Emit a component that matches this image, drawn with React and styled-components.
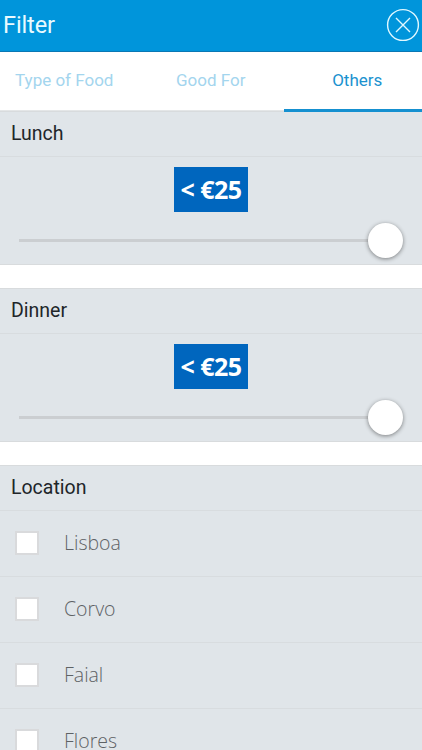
import React from 'react';
import styled, {createGlobalStyle} from "styled-components";

const tabs = ["Type of Food", "Good For", "Others"];
const prices = ["Lunch", "Dinner"];
const locations = ["Lisboa", "Corvo", "Faial", "Flores"];

function PriceFilter({title}) {
    return (
        <Section>
            <SectionTitle>{title}</SectionTitle>
            <PriceBox>
                <Price>&lt; €25</Price>
                <Slider>
                    <Track />
                    <Knob />
                </Slider>
            </PriceBox>
        </Section>
    )
}

function App() {
    return (
        <Page>
            <GlobalStyle />
            <Header>
                <Title>Filter</Title>
                <CloseButton aria-label="Close">
                    <svg width="34" height="34" viewBox="0 0 34 34" fill="none" stroke="#E0F8FF" strokeWidth="1.4">
                        <circle cx="17" cy="17" r="15.4" />
                        <path d="M10 10L24 24M24 10L10 24" />
                    </svg>
                </CloseButton>
            </Header>
            <TabBar>
                {tabs.map(tab => <Tab key={tab} $active={tab === "Others"}>{tab}</Tab>)}
            </TabBar>
            {prices.map(title => <PriceFilter key={title} title={title} />)}
            <Section>
                <SectionTitle>Location</SectionTitle>
                {locations.map(name => (
                    <LocationRow key={name}>
                        <CheckBox type="checkbox" />
                        <span>{name}</span>
                    </LocationRow>
                ))}
            </Section>
        </Page>
    )
}

export default App

const GlobalStyle = createGlobalStyle`
    * {
        box-sizing : border-box;
    }
    body {
        margin : 0;
        background-color : #fff;
        font-family : Roboto, sans-serif;
    }
`
const Page = styled.div`
    height : 750px;
    overflow : hidden;
`
const Header = styled.header`
    display : flex;
    align-items : center;
    justify-content : space-between;
    height : 52px;
    padding : 0 2px 2px 3px;
    border-bottom : 1px solid #0A78B4;
    background-color : #0095DB;
`
const Title = styled.h1`
    margin : 0;
    color : #E9FAFF;
    font-size : 23.5px;
    font-weight : 400;
    letter-spacing : -0.1px;
`
const CloseButton = styled.button`
    display : flex;
    padding : 0;
    border : none;
    background : none;
`
const TabBar = styled.nav`
    display : flex;
    height : 59px;
    margin-left : -9px;
    border-bottom : 1px solid #E4E6E7;
`
const Tab = styled.a`
    position : relative;
    flex : 0 0 146.5px;
    height : 60px;
    border-bottom : ${props => props.$active ? "3px solid #1590D0" : "none"};
    color : ${props => props.$active ? "#1B92CF" : "#A3D5EE"};
    font-size : 17px;
    line-height : 57px;
    text-align : center;
`
const Section = styled.section`
    margin-bottom : 23px;
    border : 1px solid #D8DBDD;
    border-width : 1px 0;
    background-color : #E0E5E9;
`
const SectionTitle = styled.h2`
    height : 45px;
    margin : 0;
    padding-left : 11px;
    border-bottom : 1px solid #D8DCDF;
    color : #212529;
    font-size : 19.5px;
    font-weight : 400;
    line-height : 43px;
`
const PriceBox = styled.div`
    display : flex;
    flex-direction : column;
    align-items : center;
    height : 107px;
    padding : 10px 19px 0;
`
const Price = styled.div`
    width : 74px;
    height : 45px;
    background-color : #0066BE;
    color : #fff;
    font-family : "Open Sans", sans-serif;
    font-size : 25px;
    font-weight : 700;
    letter-spacing : -0.5px;
    line-height : 45px;
    text-align : center;
    white-space : nowrap;
`
const Slider = styled.div`
    display : flex;
    align-items : center;
    width : 100%;
    height : 35px;
    margin-top : 11px;
`
const Track = styled.div`
    flex : 1;
    height : 3px;
    background-color : #CBCED1;
`
const Knob = styled.div`
    width : 35px;
    height : 35px;
    margin-bottom : 1px;
    border-radius : 50%;
    background-color : #fff;
    box-shadow : 0 1px 4px rgba(0, 0, 0, 0.45);
`
const LocationRow = styled.label`
    display : flex;
    align-items : center;
    gap : 25px;
    height : 66px;
    padding : 0 15px 1px;
    border-bottom : 1px solid #D8DCDF;
    color : #5E6265;
    font-family : "Open Sans", sans-serif;
    font-size : 19.5px;
    font-weight : 300;

    & span {
        padding-bottom : 2px;
    }
`
const CheckBox = styled.input`
    appearance : none;
    width : 24px;
    height : 24px;
    margin : 0;
    border : 2px solid #D9DADC;
    background-color : #fff;
`
